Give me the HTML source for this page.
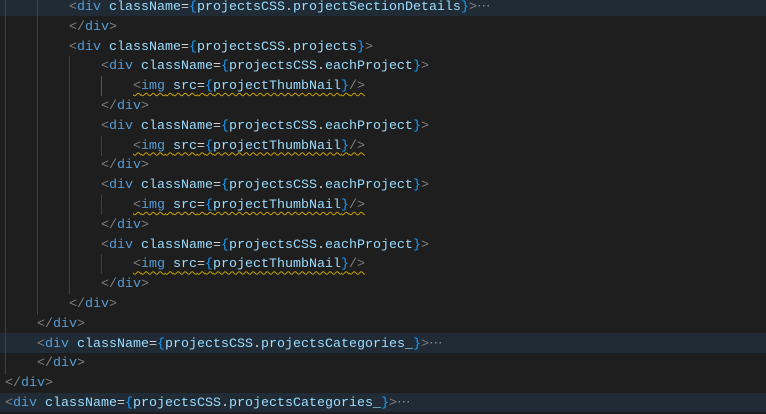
<!DOCTYPE html><html><head><style>
body{margin:0;background:#1e1e1e;width:766px;height:406px;overflow:hidden;position:relative}
.c{position:absolute;left:5px;top:-2px;font:13.33px/19.8px "Liberation Mono",monospace;white-space:pre;color:#d4d4d4}
.l{height:19.8px;position:relative}
.h{position:absolute;left:0;width:766px;height:19.8px;background:#202b36;}
.p{color:#808080}.t{color:#569cd6}.a{color:#9cdcfe}.b{color:#179fff}.d{color:#d4d4d4}
.s{text-decoration:underline wavy #c8a200;text-decoration-thickness:1px;text-underline-offset:3px}
.e{color:#8a8a8a}
.g{position:absolute;width:1px;background:#404040}
</style></head><body>
<div class="h" style="top:-3.5px"></div>
<div class="h" style="top:333.1px"></div>
<div class="h" style="top:392.5px"></div>
<div class="g" style="left:5px;top:0;height:374px"></div>
<div class="g" style="left:37px;top:0;height:315px"></div>
<div class="g" style="left:69px;top:56px;height:238px"></div>
<div class="g" style="left:101px;top:76px;height:20px;background:#555"></div>
<div class="g" style="left:101px;top:136px;height:20px"></div>
<div class="g" style="left:101px;top:195px;height:20px"></div>
<div class="g" style="left:101px;top:254px;height:20px"></div>
<div class="c"><div class="l">        <span class="p">&lt;</span><span class="t">div</span> <span class="a">className</span>=<span class="b">{</span><span class="a">projectsCSS</span>.<span class="a">projectSectionDetails</span><span class="b">}</span><span class="p">&gt;</span><span class="e">⋯</span></div><div class="l">        <span class="p">&lt;/</span><span class="t">div</span><span class="p">&gt;</span></div><div class="l">        <span class="p">&lt;</span><span class="t">div</span> <span class="a">className</span>=<span class="b">{</span><span class="a">projectsCSS</span>.<span class="a">projects</span><span class="b">}</span><span class="p">&gt;</span></div><div class="l">            <span class="p">&lt;</span><span class="t">div</span> <span class="a">className</span>=<span class="b">{</span><span class="a">projectsCSS</span>.<span class="a">eachProject</span><span class="b">}</span><span class="p">&gt;</span></div><div class="l">                <span class="s"><span class="p">&lt;</span><span class="t">img</span> <span class="a">src</span>=<span class="b">{</span><span class="a">projectThumbNail</span><span class="b">}</span><span class="p">/&gt;</span></span></div><div class="l">            <span class="p">&lt;/</span><span class="t">div</span><span class="p">&gt;</span></div><div class="l">            <span class="p">&lt;</span><span class="t">div</span> <span class="a">className</span>=<span class="b">{</span><span class="a">projectsCSS</span>.<span class="a">eachProject</span><span class="b">}</span><span class="p">&gt;</span></div><div class="l">                <span class="s"><span class="p">&lt;</span><span class="t">img</span> <span class="a">src</span>=<span class="b">{</span><span class="a">projectThumbNail</span><span class="b">}</span><span class="p">/&gt;</span></span></div><div class="l">            <span class="p">&lt;/</span><span class="t">div</span><span class="p">&gt;</span></div><div class="l">            <span class="p">&lt;</span><span class="t">div</span> <span class="a">className</span>=<span class="b">{</span><span class="a">projectsCSS</span>.<span class="a">eachProject</span><span class="b">}</span><span class="p">&gt;</span></div><div class="l">                <span class="s"><span class="p">&lt;</span><span class="t">img</span> <span class="a">src</span>=<span class="b">{</span><span class="a">projectThumbNail</span><span class="b">}</span><span class="p">/&gt;</span></span></div><div class="l">            <span class="p">&lt;/</span><span class="t">div</span><span class="p">&gt;</span></div><div class="l">            <span class="p">&lt;</span><span class="t">div</span> <span class="a">className</span>=<span class="b">{</span><span class="a">projectsCSS</span>.<span class="a">eachProject</span><span class="b">}</span><span class="p">&gt;</span></div><div class="l">                <span class="s"><span class="p">&lt;</span><span class="t">img</span> <span class="a">src</span>=<span class="b">{</span><span class="a">projectThumbNail</span><span class="b">}</span><span class="p">/&gt;</span></span></div><div class="l">            <span class="p">&lt;/</span><span class="t">div</span><span class="p">&gt;</span></div><div class="l">        <span class="p">&lt;/</span><span class="t">div</span><span class="p">&gt;</span></div><div class="l">    <span class="p">&lt;/</span><span class="t">div</span><span class="p">&gt;</span></div><div class="l">    <span class="p">&lt;</span><span class="t">div</span> <span class="a">className</span>=<span class="b">{</span><span class="a">projectsCSS</span>.<span class="a">projectsCategories_</span><span class="b">}</span><span class="p">&gt;</span><span class="e">⋯</span></div><div class="l">    <span class="p">&lt;/</span><span class="t">div</span><span class="p">&gt;</span></div><div class="l"><span class="p">&lt;/</span><span class="t">div</span><span class="p">&gt;</span></div><div class="l"><span class="p">&lt;</span><span class="t">div</span> <span class="a">className</span>=<span class="b">{</span><span class="a">projectsCSS</span>.<span class="a">projectsCategories_</span><span class="b">}</span><span class="p">&gt;</span><span class="e">⋯</span></div></div>
</body></html>
